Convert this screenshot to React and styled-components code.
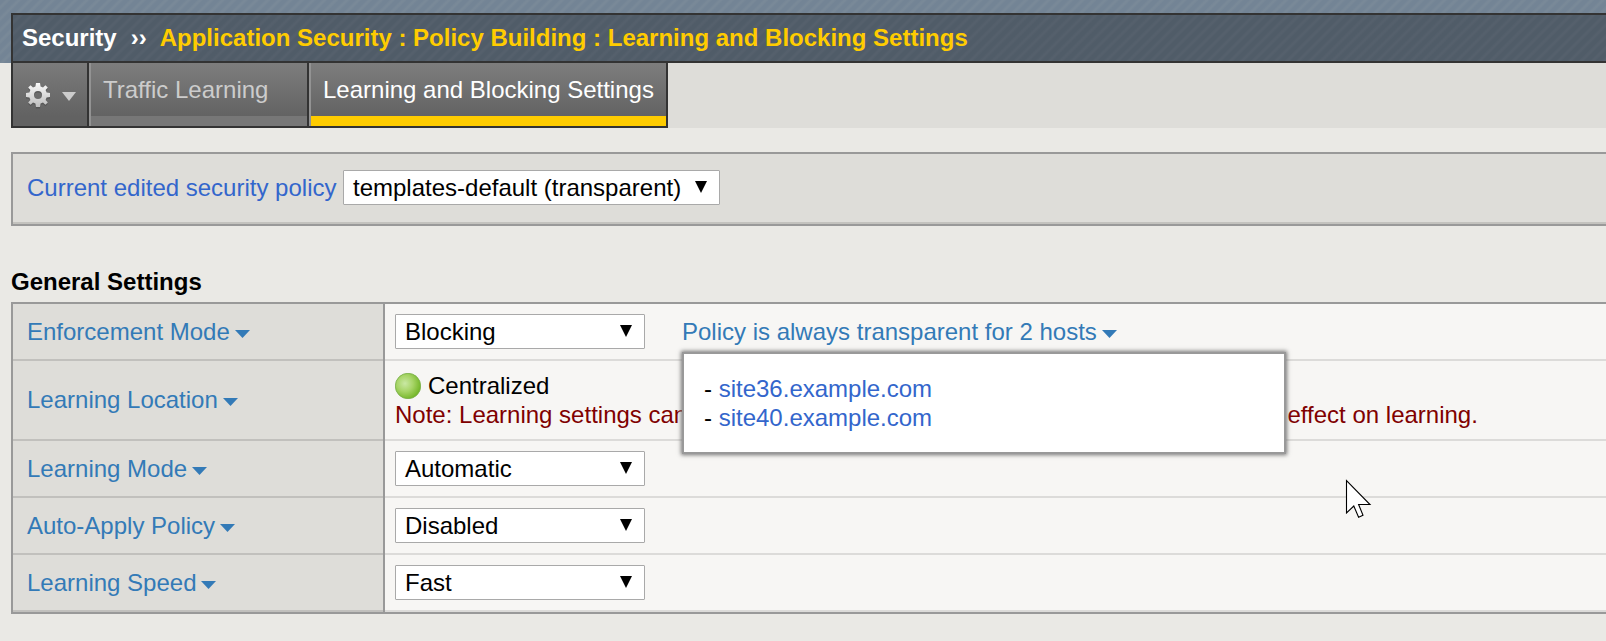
import React from 'react';
import styled, { createGlobalStyle } from 'styled-components';

const Global = createGlobalStyle`
  * { box-sizing: border-box; }
  body {
    margin: 0;
    background: #eae9e5;
    font: 24px/29px "Liberation Sans", Arial, sans-serif;
    color: #000;
    overflow: hidden;
  }
`;

const Page = styled.div`
  position: relative;
  width: 1606px;
  height: 641px;
  overflow: hidden;
`;

const Banner = styled.header`
  height: 63px;
  padding: 13px 0 0 11px;
  background: repeating-linear-gradient(135deg, #738495 0 3px, #798998 5px 6px, #738495 8px);
`;

const Breadcrumb = styled.div`
  display: flex;
  align-items: center;
  height: 50px;
  padding: 0 0 1px 9px;
  border: 2px solid #333;
  border-right: 0;
  background: repeating-linear-gradient(135deg, #505c68 0 3px, #55606c 5px 6px, #505c68 8px);
  font-weight: bold;
  color: #fff;
  white-space: pre;
`;

const Crumb = styled.span`
  color: ${(p) => (p.$current ? '#fc0' : '#fff')};
  margin-right: ${(p) => p.$gap || 0}px;
`;

const TabBar = styled.nav`
  display: flex;
  height: 65px;
  margin-left: 11px;
  background: #deddd9;
`;

const GearMenu = styled.div`
  display: flex;
  width: 78px;
  border: 2px solid #333;
  border-top: 0;
  padding: 19px 0 0 12px;
  background: linear-gradient(#7b7b7b, #626262 85%);
`;

const GearCaret = styled.svg`
  margin: 10px 0 0 11px;
`;

const Tab = styled.div`
  width: ${(p) => p.$width}px;
  border: solid #333;
  border-width: 0 2px 2px 0;
  background: linear-gradient(#7d7d7d, #636363 53px);
  box-shadow: inset 2px 0 #939393;
  padding-left: 2px;
`;

const TabLabel = styled.div`
  height: 63px;
  padding: 12px 0 0 ${(p) => p.$indent}px;
  border-bottom: 10px solid ${(p) => (p.$active ? '#fc0' : '#777')};
  color: ${(p) => (p.$active ? '#fff' : '#ccc')};
  white-space: nowrap;
`;

const PolicyPanel = styled.section`
  display: flex;
  align-items: flex-start;
  height: 74px;
  margin: 24px 0 0 11px;
  padding: 16px 0 0 14px;
  border: 2px solid #999;
  border-right: 0;
  background: #deddd9;
  box-shadow: inset 0 -2px #c3c2be;
`;

const PolicyLabel = styled.span`
  width: 316px;
  padding-top: 3px;
  color: #36c;
  white-space: nowrap;
`;

const SelectBox = styled.div`
  display: flex;
  justify-content: space-between;
  width: ${(p) => p.$width || 250}px;
  height: 35px;
  padding: 3px 12px 0 9px;
  border: 1px solid #a9a9a9;
  border-radius: 1px;
  background: #fff;
  line-height: 28px;
  white-space: nowrap;
`;

const SelectArrow = styled.svg`
  margin-top: 7px;
`;

const Heading = styled.h1`
  margin: 41px 0 6px 11px;
  font-size: 24px;
  line-height: 29px;
`;

const Table = styled.section`
  margin-left: 11px;
  border: 2px solid #999;
  border-right: 0;
`;

const Row = styled.div`
  display: flex;
  height: ${(p) => p.$height || 57}px;
`;

const LabelCell = styled.div`
  display: flex;
  align-items: center;
  width: 372px;
  padding: 0 0 ${(p) => (p.$tall ? 3 : 2)}px 14px;
  border-right: 2px solid #999;
  box-shadow: inset 0 -2px #c1c0bd;
  background: #deddd9;
  color: #337ab7;
`;

const ValueCell = styled.div`
  position: relative;
  flex: 1;
  padding: 10px 0 0 10px;
  background: #f7f6f4;
  box-shadow: inset 0 -2px #dcdbd9;
  display: ${(p) => (p.$stacked ? 'block' : 'flex')};
`;

const LinkCaret = styled.svg`
  margin: 5px 0 0 5px;
`;

const HostsLink = styled.div`
  display: flex;
  align-items: center;
  height: 35px;
  margin-left: 37px;
  color: #337ab7;
  white-space: nowrap;
`;

const Popup = styled.div`
  position: absolute;
  z-index: 2;
  left: 297px;
  top: 48px;
  width: 604px;
  height: 102px;
  padding: 20px 0 0 20px;
  border: 2px solid #999;
  background: #fff;
  box-shadow: 0 0 4px 1px #777;
`;

const Host = styled.div`
  color: #36c;
  &::before { content: "- "; color: #000; }
`;

const Status = styled.div`
  display: flex;
  gap: 7px;
  height: 29px;
`;

const StatusBall = styled.svg`
  margin-top: 2px;
`;

const Note = styled.div`
  display: flex;
  color: #800000;
  white-space: nowrap;
`;

const NoteLead = styled.span`
  width: 892.5px;
`;

const Pointer = styled.svg`
  position: absolute;
  left: 1345px;
  top: 479px;
`;

const Caret = () => (
  <LinkCaret width="15" height="8"><path d="M0 0H15L7.5 8Z" fill="#337ab7" /></LinkCaret>
);

const Select = ({ children, width }) => (
  <SelectBox $width={width}>
    <span>{children}</span>
    <SelectArrow width="12" height="12"><path d="M0 0H12L6 12Z" /></SelectArrow>
  </SelectBox>
);

const Gear = () => (
  <svg width="26" height="28" viewBox="-13 -13 26 28">
    <defs>
      <linearGradient id="gear" gradientUnits="userSpaceOnUse" x1="0" y1="-12" x2="0" y2="12">
        <stop offset="0" stopColor="#fafafa" />
        <stop offset="1" stopColor="#bdbdbd" />
      </linearGradient>
      <path
        id="cog"
        fillRule="evenodd"
        d="M-2 -12H2L2.6 -8.6L5 -7.6L7.4 -9.8L9.8 -7.4L7.6 -5L8.6 -2.4L12 -2V2L8.6 2.6L7.6 5L9.8 7.4L7.4 9.8L5 7.6L2.6 8.6L2 12H-2L-2.6 8.6L-5 7.6L-7.4 9.8L-9.8 7.4L-7.6 5L-8.6 2.6L-12 2V-2L-8.6 -2.6L-7.6 -5L-9.8 -7.4L-7.4 -9.8L-5 -7.6L-2.6 -8.6ZM0 -4A4 4 0 1 0 0 4A4 4 0 1 0 0 -4Z"
      />
    </defs>
    <use href="#cog" y="1.5" fill="#444" opacity=".5" />
    <use href="#cog" fill="url(#gear)" />
  </svg>
);

const Ball = () => (
  <StatusBall width="26" height="26" viewBox="0 0 26 26">
    <defs>
      <radialGradient id="ball" cx=".38" cy=".4" r=".62">
        <stop offset="0" stopColor="#c9e8a4" />
        <stop offset=".5" stopColor="#a8d568" />
        <stop offset="1" stopColor="#76b72a" />
      </radialGradient>
    </defs>
    <circle cx="13" cy="13" r="12.7" fill="url(#ball)" stroke="#77ad48" strokeWidth=".8" />
  </StatusBall>
);

const modes = [
  ['Learning Mode', 'Automatic'],
  ['Auto-Apply Policy', 'Disabled'],
  ['Learning Speed', 'Fast'],
];

export default function App() {
  return (
    <Page>
      <Global />
      <Banner>
        <Breadcrumb>
          <Crumb $gap={14}>Security</Crumb>
          <Crumb $gap={13}>››</Crumb>
          <Crumb $current>Application Security : Policy Building : Learning and Blocking Settings</Crumb>
        </Breadcrumb>
      </Banner>
      <TabBar>
        <GearMenu>
          <Gear />
          <GearCaret width="14" height="10"><path d="M0 0H14L7 9Z" fill="#ccc" /></GearCaret>
        </GearMenu>
        <Tab $width={220}><TabLabel $indent={12}>Traffic Learning</TabLabel></Tab>
        <Tab $width={359}><TabLabel $indent={12} $active>Learning and Blocking Settings</TabLabel></Tab>
      </TabBar>
      <PolicyPanel>
        <PolicyLabel>Current edited security policy</PolicyLabel>
        <Select width={377}>templates-default (transparent)</Select>
      </PolicyPanel>
      <Heading>General Settings</Heading>
      <Table>
        <Row>
          <LabelCell>Enforcement Mode<Caret /></LabelCell>
          <ValueCell>
            <Select>Blocking</Select>
            <HostsLink>Policy is always transparent for 2 hosts<Caret /></HostsLink>
            <Popup>
              <Host>site36.example.com</Host>
              <Host>site40.example.com</Host>
            </Popup>
          </ValueCell>
        </Row>
        <Row $height={80}>
          <LabelCell $tall>Learning Location<Caret /></LabelCell>
          <ValueCell $stacked>
            <Status><Ball />Centralized</Status>
            <Note><NoteLead>Note: Learning settings can</NoteLead>effect on learning.</Note>
          </ValueCell>
        </Row>
        {modes.map(([label, value]) => (
          <Row key={label}>
            <LabelCell>{label}<Caret /></LabelCell>
            <ValueCell><Select>{value}</Select></ValueCell>
          </Row>
        ))}
      </Table>
      <Pointer width="28" height="42">
        <path d="M1.5 1.5V34L8.8 27L13.6 38.3L18 36.2L13.6 25.5H25Z" fill="#fff" stroke="#000" strokeWidth="1.1" />
      </Pointer>
    </Page>
  );
}
